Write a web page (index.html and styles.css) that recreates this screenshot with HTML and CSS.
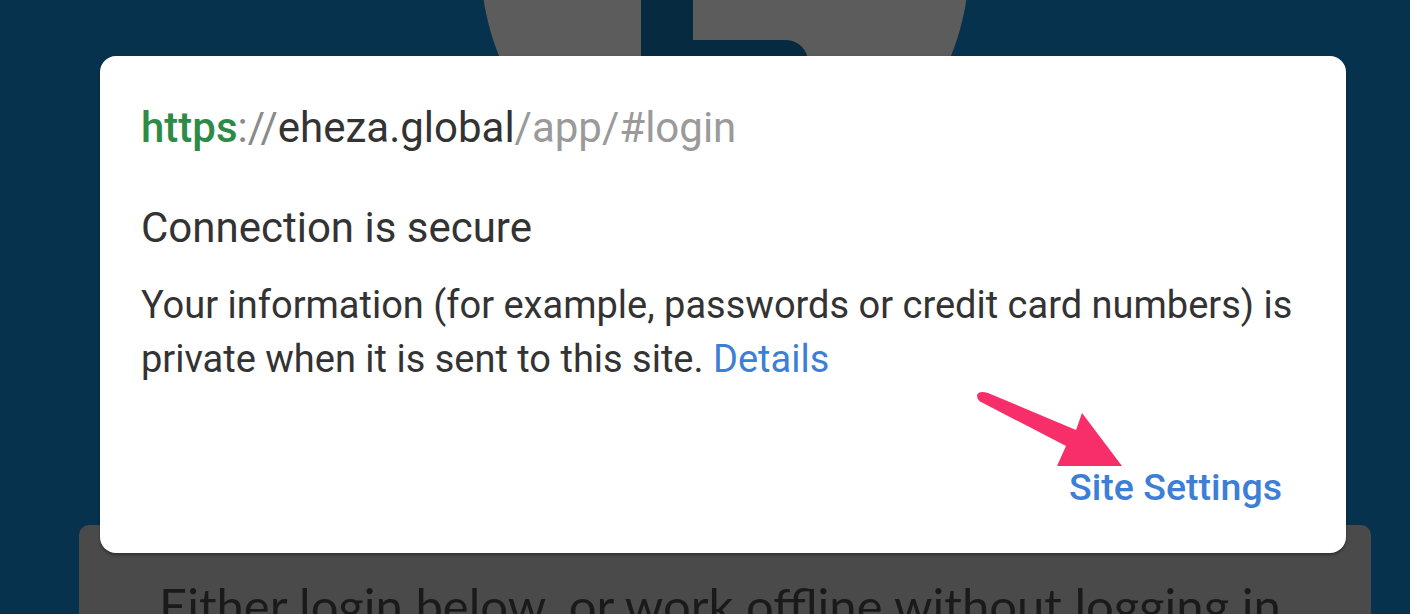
FILE: index.html
```html
<!DOCTYPE html>
<html>
<head>
<meta charset="utf-8">
<link rel="stylesheet" href="styles.css">
</head>
<body>
<div class="scene">
  <div class="logo">
    <div class="logo-mark"></div>
  </div>
  <div class="login-card">
    <p class="login-text">Either login below, or work offline without logging in</p>
  </div>
</div>

<div class="dialog">
  <div class="url">
    <span class="scheme">https</span><span class="sep">://</span><span class="host">eheza.global</span><span class="path">/app/#login</span>
  </div>
  <div class="title">Connection is secure</div>
  <p class="desc">Your information (for example, passwords or credit card numbers) is private when it is sent to this site. <a class="link">Details</a></p>
  <div class="actions">
    <a class="site-settings">Site Settings</a>
  </div>
</div>

<svg class="arrow" width="1410" height="614" viewBox="0 0 1410 614">
  <path d="M977 395 Q977 401 983 403 L1066 446 L1057 466 L1122 466 L1082 413 L1076 430 L988 393 Q979 390 977 395 Z" fill="#f72e6a"/>
</svg>
</body>
</html>
```

FILE: styles.css
```css
html, body {
  margin: 0;
  padding: 0;
}
body {
  width: 1410px;
  height: 614px;
  overflow: hidden;
  background: #07324d;
  font-family: Roboto, "Liberation Sans", sans-serif;
  position: relative;
}
.scene {
  display: flex;
  flex-direction: column;
  align-items: center;
  padding-left: 40px;
  height: 614px;
  box-sizing: border-box;
  overflow: hidden;
}
.logo {
  flex: none;
  width: 488px;
  height: 488px;
  margin-top: -280px;
  border-radius: 50%;
  background: #5c5c5c;
  position: relative;
  overflow: hidden;
}
.logo-mark {
  position: absolute;
  left: 160px;
  top: 0;
  width: 167px;
  height: 400px;
  border-left: 52px solid #062a40;
  box-sizing: border-box;
}
.logo-mark::after {
  content: "";
  position: absolute;
  left: 0;
  top: 320px;
  width: 115px;
  height: 60px;
  background: #062a40;
  border-top-right-radius: 22px;
}
.login-card {
  flex: none;
  margin-top: 317px;
  width: 1292px;
  height: 200px;
  background: #4a4a4a;
  border-radius: 10px;
  box-sizing: border-box;
  padding: 56px 0 0 80px;
}
.login-text {
  margin: 0;
  font-family: Lato, sans-serif;
  font-size: 49px;
  line-height: 48px;
  color: #1a1a1a;
  white-space: nowrap;
}
.dialog {
  position: absolute;
  left: 100px;
  top: 56px;
  width: 1246px;
  height: 497px;
  background: #fff;
  border-radius: 16px;
  box-shadow: 0 2px 3px rgba(0,0,0,0.35);
  box-sizing: border-box;
  padding: 0 41px;
  display: flex;
  flex-direction: column;
}
.url {
  margin-top: 47px;
  font-size: 42px;
  line-height: 50px;
  color: #333;
  white-space: nowrap;
}
.scheme { color: #2e8b47; font-weight: 500; }
.sep { color: #8a8a8a; }
.host { color: #333; }
.path { color: #9a9a9a; }
.title {
  margin-top: 50px;
  font-size: 42px;
  line-height: 50px;
  color: #333;
}
.desc {
  margin: 25px 0 0;
  font-size: 38px;
  line-height: 54px;
  color: #333;
}
.link { color: #3d7fd6; }
.actions {
  display: flex;
  justify-content: flex-end;
  margin-top: 79px;
  padding-right: 23px;
}
.site-settings {
  font-size: 37.5px;
  font-weight: 500;
  color: #3d7fd6;
  line-height: 44px;
}
.arrow {
  position: absolute;
  left: 0;
  top: 0;
}
```
